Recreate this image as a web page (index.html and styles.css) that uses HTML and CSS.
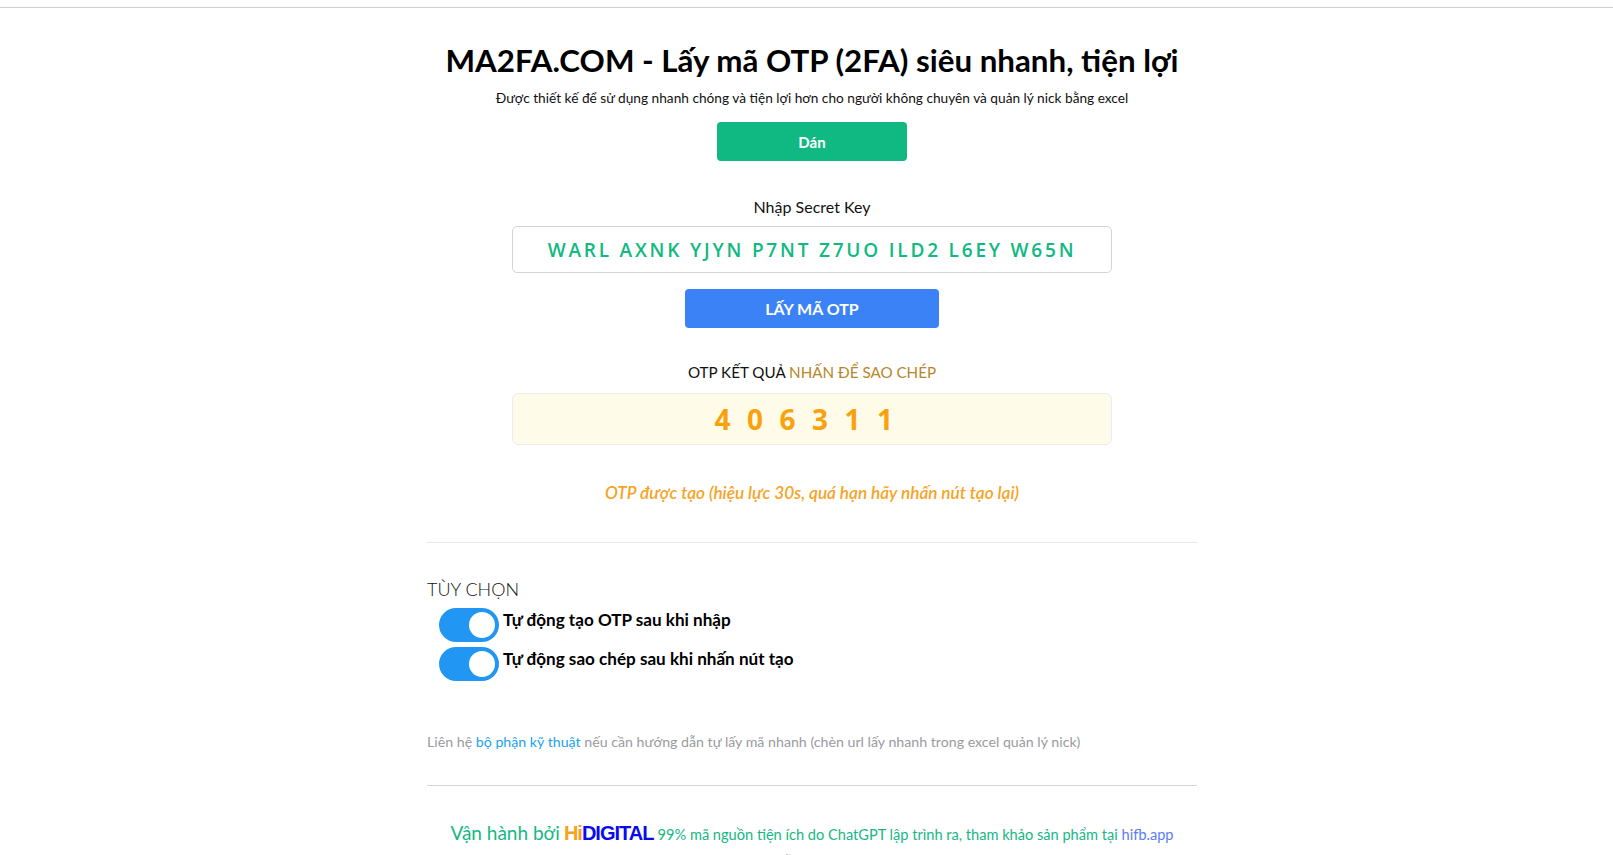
FILE: index.html
```html
<!DOCTYPE html>
<html lang="vi">
<head>
<meta charset="utf-8">
<title>MA2FA.COM - Lấy mã OTP (2FA)</title>
<link rel="stylesheet" href="styles.css">
</head>
<body>
<div class="topline"></div>
<div class="page">
  <div class="wrap">
    <h1 class="title">MA2FA.COM - Lấy mã OTP (2FA) siêu nhanh, tiện lợi</h1>
    <p class="subtitle">Được thiết kế để sử dụng nhanh chóng và tiện lợi hơn cho người không chuyên và quản lý nick bằng excel</p>
    <button class="btn btn-paste">Dán</button>
    <div class="label">Nhập Secret Key</div>
    <input class="key" type="text" value="WARL AXNK YJYN P7NT Z7UO ILD2 L6EY W65N">
    <button class="btn btn-get">LẤY MÃ OTP</button>
    <div class="label label-result">OTP KẾT QUẢ <span class="copy">NHẤN ĐỂ SAO CHÉP</span></div>
    <div class="otp">406311</div>
    <div class="note">OTP được tạo (hiệu lực 30s, quá hạn hãy nhấn nút tạo lại)</div>
    <hr class="sep">
    <div class="opt-title">TÙY CHỌN</div>
    <div class="opts">
      <label class="opt"><span class="switch"><span class="knob"></span></span><span class="opt-text">Tự động tạo OTP sau khi nhập</span></label>
      <label class="opt"><span class="switch"><span class="knob"></span></span><span class="opt-text">Tự động sao chép sau khi nhấn nút tạo</span></label>
    </div>
    <p class="contact">Liên hệ <a class="tech" href="#">bộ phận kỹ thuật</a> nếu cần hướng dẫn tự lấy mã nhanh (chèn url lấy nhanh trong excel quản lý nick)</p>
    <hr class="sep sep2">
    <div class="footer">
      <span class="by">Vận hành bởi</span> <span class="brand"><span class="hi">Hi</span><span class="dig">DIGITAL</span></span> <span class="gpt">99% mã nguồn tiện ích do ChatGPT lập trình ra, tham khảo sản phẩm tại <a class="hifb" href="#">hifb.app</a></span>
    </div>
    <div class="footer2">Sử dụng tài khoản ChatGPT miễn phí tại <a class="hifb" href="#">https://ai.hifb.app/chatgpt669</a></div>
  </div>
</div>
</body>
</html>
```

FILE: styles.css
```css
* { box-sizing: border-box; }
html, body { margin: 0; padding: 0; background: #fff; }
body {
  font-family: "Segoe UI", Lato, "Open Sans", sans-serif;
  color: #111;
  overflow: hidden;
}
.topline {
  height: 8px;
  border-bottom: 1px solid #cfcfcf;
}
.page { padding-left: 11px; }
.wrap {
  width: 770px;
  margin: 0 auto;
  text-align: center;
}
.title {
  margin: 33px 0 0;
  font-size: 31.3px;
  line-height: 38px;
  font-weight: 700;
  color: #000;
}
.subtitle {
  margin: 9px 0 0;
  font-size: 13.7px;
  line-height: 20px;
  color: #111;
}
.btn {
  display: block;
  margin: 0 auto;
  border: 0;
  border-radius: 4px;
  color: #fff;
  font-family: inherit;
  font-weight: 700;
  font-size: 15px;
  height: 39px;
  cursor: pointer;
}
.btn-paste {
  margin-top: 14px;
  width: 190px;
  background: #10b981;
}
.label {
  margin-top: 35px;
  font-size: 16px;
  line-height: 22px;
  color: #111;
}
.key {
  display: block;
  margin: 8px auto 0;
  width: 600px;
  height: 47px;
  border: 1px solid #d4d4d8;
  border-radius: 5px;
  text-align: center;
  font-family: "Open Sans", sans-serif;
  font-size: 19px;
  font-weight: 600;
  letter-spacing: 2.8px;
  color: #10b981;
  outline: none;
}
.btn-get {
  margin-top: 16px;
  width: 254px;
  background: #3b82f6;
  font-size: 16px;
}
.label-result { margin-top: 33px; font-size: 15.2px; }
.copy { color: #b8862b; }
.otp {
  margin: 10px auto 0;
  width: 600px;
  height: 52px;
  background: #fefce8;
  border: 1px solid #ececec;
  border-radius: 6px;
  font-family: "Open Sans", sans-serif;
  font-size: 28px;
  font-weight: 700;
  line-height: 50px;
  letter-spacing: 16.5px;
  color: #f9a10e;
}
.note {
  margin-top: 37px;
  font-size: 17.2px;
  line-height: 22px;
  font-style: italic;
  font-weight: 600;
  color: #f7a325;
}
.sep {
  margin: 38px 0 0;
  border: 0;
  border-top: 1px solid #e6e6e6;
  height: 0;
}
.opt-title {
  margin-top: 34px;
  text-align: left;
  font-size: 18px;
  line-height: 24px;
  font-weight: 300;
  color: #111;
}
.opts {
  margin-top: 7px;
  padding-left: 12px;
  display: flex;
  flex-direction: column;
  gap: 5px;
  text-align: left;
}
.opt {
  display: flex;
  align-items: flex-start;
  gap: 4px;
  height: 34px;
}
.switch {
  position: relative;
  flex: none;
  width: 60px;
  height: 34px;
  border-radius: 34px;
  background: #2196f3;
}
.knob {
  position: absolute;
  left: 30px;
  top: 4px;
  width: 26px;
  height: 26px;
  border-radius: 50%;
  background: #fff;
}
.opt-text {
  font-size: 17.1px;
  line-height: 24px;
  font-weight: 700;
  color: #000;
}
.contact {
  margin: 51px 0 0;
  text-align: left;
  font-size: 14.2px;
  line-height: 20px;
  color: #9a9aa0;
}
.tech { color: #1aa3f0; text-decoration: none; }
.sep2 {
  margin-top: 33px;
  border-top-color: #d4d4d8;
}
.footer {
  margin-top: 33px;
  line-height: 28px;
  color: #14b884;
}
.by { font-size: 19px; }
.brand {
  font-family: "Liberation Sans", Arial, sans-serif;
  font-weight: 700;
  font-size: 20px;
  letter-spacing: -1px;
}
.hi { color: #f7a21b; }
.dig { color: #0a0af0; }
.gpt { font-size: 14.6px; }
.hifb { color: #5b7cf5; text-decoration: none; }
.footer2 {
  margin-top: 2px;
  font-size: 14px;
  line-height: 20px;
  color: #b0b0b8;
}
```
